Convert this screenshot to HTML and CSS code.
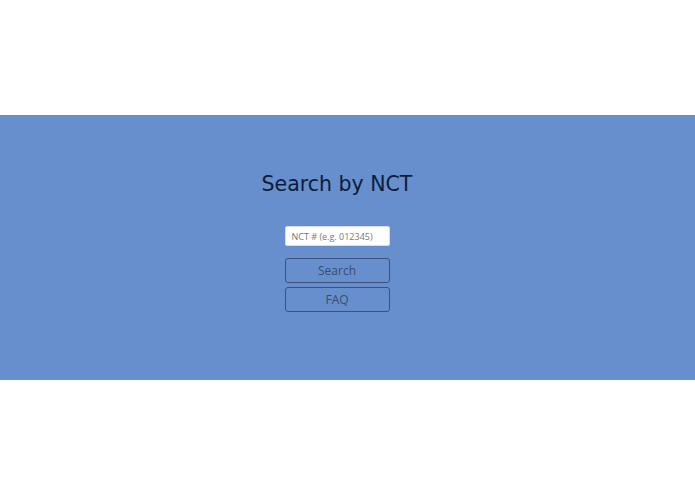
FILE: index.html
```html
<!DOCTYPE html>
<html>
<head>
<meta charset="utf-8">
<link rel="stylesheet" href="styles.css">
</head>
<body>
<div class="top"></div>
<section class="band">
  <h1 class="title">Search by NCT</h1>
  <input class="nct" type="text" placeholder="NCT # (e.g. 012345)">
  <button class="btn btn-search">Search</button>
  <button class="btn">FAQ</button>
</section>
</body>
</html>
```
FILE: styles.css
```css
html, body { margin: 0; padding: 0; background: #fff; }
body { width: 695px; height: 494px; overflow: hidden; }
.top { height: 115px; }
.band {
  height: 265px;
  background: #678fcd;
  display: flex;
  flex-direction: column;
  align-items: center;
  padding-top: 56px;
  padding-right: 21px;
  box-sizing: border-box;
}
.title {
  margin: 0;
  font-family: "DejaVu Sans", sans-serif;
  font-weight: normal;
  font-size: 20.5px;
  line-height: 26px;
  color: #0e1c3a;
}
.nct {
  margin-top: 29px;
  width: 105px;
  height: 20px;
  box-sizing: border-box;
  border: 1px solid #d8dce4;
  border-radius: 2px;
  background: #fff;
  padding: 0 6px;
  font-family: "Open Sans", sans-serif;
  font-size: 9px;
  outline: none;
}
.nct::placeholder { color: #777; }
.btn {
  width: 105px;
  height: 25px;
  box-sizing: border-box;
  border: 1px solid #3e5279;
  border-radius: 3px;
  background: transparent;
  color: #3a4d6e;
  font-family: "Open Sans", sans-serif;
  font-size: 12px;
  padding: 0;
  margin-top: 4px;
}
.btn-search { margin-top: 12px; }
```
